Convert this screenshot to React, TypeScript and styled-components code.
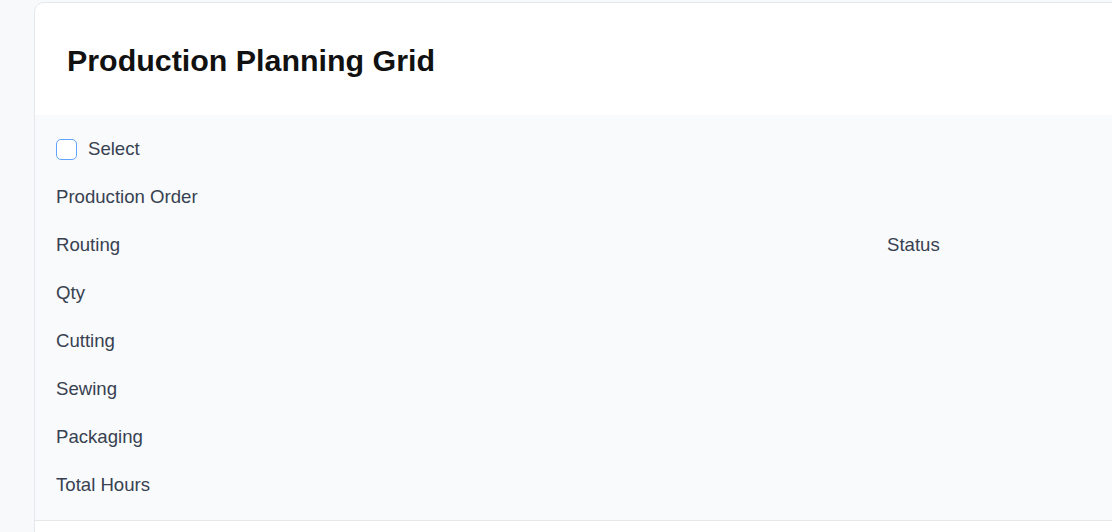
import React from "react";
import styled, { createGlobalStyle } from "styled-components";

const Global = createGlobalStyle`
  html, body { margin: 0; padding: 0; background: #f8f9fa; overflow: hidden; }
  body { font-family: "Liberation Sans", Arial, Helvetica, sans-serif; }
`;

const Page = styled.div`
  padding: 2px 0 0 34px;
  height: 530px;
  overflow: hidden;
`;

const Card = styled.div`
  width: 1120px;
  min-height: 560px;
  background: #ffffff;
  border: 1px solid #e5e7eb;
  border-radius: 10px;
  overflow: hidden;
`;

const Header = styled.div`
  height: 112px;
  padding: 3px 32px 0;
  display: flex;
  align-items: center;
  box-sizing: border-box;
`;

const Title = styled.h1`
  margin: 0;
  font-size: 30.4px;
  font-weight: 700;
  color: #111111;
`;

const Grid = styled.div`
  background: #f9fafb;
  padding: 10px 21px 11px;
  border-bottom: 1px solid #e5e7eb;
`;

const Row = styled.div<{ $split?: boolean }>`
  height: 48px;
  display: grid;
  grid-template-columns: ${(p) => (p.$split ? "831px auto" : "auto")};
  align-items: center;
  font-size: 18.6px;
  color: #374151;
`;

const Label = styled.label`
  display: flex;
  align-items: center;
  gap: 11px;
`;

const Box = styled.span`
  box-sizing: border-box;
  width: 21px;
  height: 21px;
  border: 1.5px solid #60a5fa;
  border-radius: 5px;
  background: #ffffff;
  display: inline-block;
`;

const rows = ["Production Order", "Routing", "Qty", "Cutting", "Sewing", "Packaging", "Total Hours"];

export default function App() {
  return (
    <>
      <Global />
      <Page>
        <Card>
          <Header>
            <Title>Production Planning Grid</Title>
          </Header>
          <Grid>
            <Row>
              <Label>
                <Box />
                Select
              </Label>
            </Row>
            {rows.map((r) =>
              r === "Routing" ? (
                <Row key={r} $split>
                  <span>{r}</span>
                  <span>Status</span>
                </Row>
              ) : (
                <Row key={r}>
                  <span>{r}</span>
                </Row>
              )
            )}
          </Grid>
        </Card>
      </Page>
    </>
  );
}
